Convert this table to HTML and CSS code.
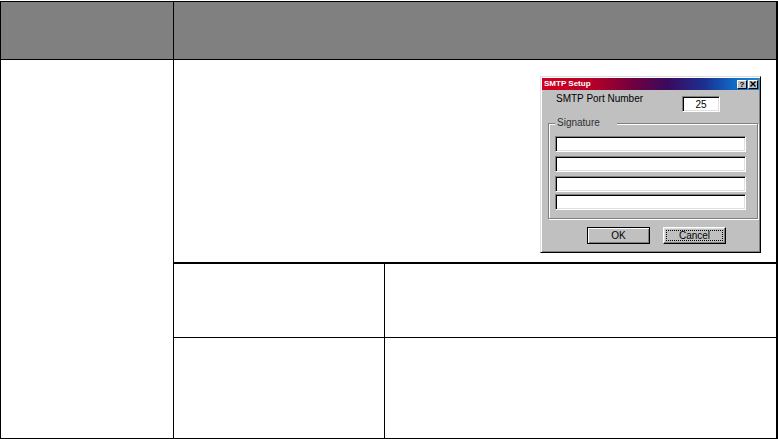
FILE: index.html
```html
<!DOCTYPE html>
<html>
<head>
<meta charset="utf-8">
<link rel="stylesheet" href="styles.css">
</head>
<body>
<div class="tbl">
  <div class="hcell"></div>
  <div class="hcell hcell-2"></div>
  <div class="bcell"></div>
  <div class="bcell-2">
    <div class="shot">
      <div class="dlg">
        <div class="title">
          <span class="title-text">SMTP Setup</span>
          <span class="tb">?</span>
          <span class="tb tb-x"><svg width="6" height="6" viewBox="0 0 6 6"><path d="M0.5 0.5L5.5 5.5M5.5 0.5L0.5 5.5" stroke="#000" stroke-width="1.4"/></svg></span>
        </div>
        <div class="port">
          <span class="lbl">SMTP Port Number</span>
          <span class="tbox">25</span>
        </div>
        <div class="grp">
          <span class="glbl">Signature</span>
          <div class="fld"></div>
          <div class="fld fld-2"></div>
          <div class="fld fld-3"></div>
          <div class="fld fld-4"></div>
        </div>
        <div class="btns">
          <div class="btn btn-ok">OK</div>
          <div class="btn btn-cancel"><span class="focus">Cancel</span></div>
        </div>
      </div>
    </div>
    <div class="row row-a">
      <div class="ca"></div>
      <div class="cb"></div>
    </div>
    <div class="row row-b">
      <div class="ca"></div>
      <div class="cb"></div>
    </div>
  </div>
</div>
</body>
</html>
```
FILE: styles.css
```css
* { box-sizing: border-box; }
body {
  margin: 0;
  background: #fff;
  font-family: "Liberation Sans", Arial, sans-serif;
}
.tbl {
  margin-top: 1px;
  width: 778px;
  border: 1px solid #000;
  border-right-width: 2px;
  display: grid;
  grid-template-columns: 172px 1fr;
  grid-template-rows: 58px 378px;
}
.hcell {
  background: #808080;
  border-bottom: 1px solid #000;
}
.hcell-2 { border-left: 1px solid #000; }
.bcell { background: #fff; }
.bcell-2 {
  border-left: 1px solid #000;
  display: flex;
  flex-direction: column;
}
.shot {
  height: 204px;
  border-bottom: 2px solid #000;
  display: flex;
  justify-content: flex-end;
  align-items: flex-start;
  padding: 16px 15px 0 0;
}
.row {
  display: grid;
  grid-template-columns: 211px 1fr;
}
.row-a { height: 74px; border-bottom: 1px solid #000; }
.row-b { height: 100px; }
.ca { border-right: 1px solid #000; }

/* dialog */
.dlg {
  width: 221px;
  height: 177px;
  background: #c0c0c0;
  border: 1px solid;
  border-color: #dfdfdf #000 #000 #dfdfdf;
  padding: 1px;
  box-shadow: inset 1px 1px 0 #fff, inset -1px -1px 0 #808080;
  display: flex;
  flex-direction: column;
  color: #000;
}
.title {
  height: 12px;
  background: linear-gradient(to right, #d40020 0%, #b00028 25%, #700040 42%, #3a0a5e 58%, #1c3090 75%, #1068c4 88%, #1888d8 100%);
  display: flex;
  align-items: center;
  padding: 0 1px 0 2px;
  gap: 1px;
}
.title-text {
  flex: 1;
  color: #fff;
  font-weight: bold;
  font-size: 8px;
  line-height: 10px;
}
.tb {
  width: 10px;
  height: 9px;
  background: #c0c0c0;
  border: 1px solid;
  border-color: #fff #000 #000 #fff;
  display: flex;
  align-items: center;
  justify-content: center;
  font-size: 8px;
  font-weight: bold;
  line-height: 7px;
  color: #000;
}
.port {
  display: flex;
  align-items: center;
  margin-top: 6px;
  height: 16px;
  font-size: 10px;
}
.lbl {
  width: 140px;
  padding-left: 14px;
  align-self: flex-start;
  margin-top: -3px;
  line-height: 12px;
}
.tbox {
  width: 38px;
  height: 16px;
  background: #fff;
  border: 1px solid;
  border-color: #808080 #fff #fff #808080;
  box-shadow: inset 1px 1px 0 #000, inset -1px -1px 0 #dfdfdf;
  display: flex;
  align-items: center;
  justify-content: center;
  font-size: 10px;
}
.grp {
  position: relative;
  margin: 11px 0 0 6px;
  width: 210px;
  height: 96px;
  border: 1px solid #808080;
  box-shadow: inset 1px 1px 0 #fff, 1px 1px 0 #fff;
  padding: 12px 0 0 6px;
  display: flex;
  flex-direction: column;
}
.glbl {
  position: absolute;
  top: -7px;
  left: 6px;
  padding: 0 17px 0 2px;
  background: #c0c0c0;
  font-size: 10px;
  line-height: 12px;
  color: #303030;
}
.fld {
  width: 191px;
  height: 16px;
  flex: none;
  background: #fff;
  border: 1px solid;
  border-color: #808080 #fff #fff #808080;
  box-shadow: inset 1px 1px 0 #000, inset -1px -1px 0 #dfdfdf;
}
.fld-2, .fld-3 { margin-top: 4px; }
.fld-4 { margin-top: 2px; }
.btns {
  display: flex;
  margin: 8px 0 0 45px;
  gap: 13px;
}
.btn {
  width: 63px;
  height: 17px;
  display: flex;
  align-items: center;
  justify-content: center;
  font-size: 10px;
  background: #c0c0c0;
}
.btn-ok {
  border: 1px solid #000;
  box-shadow: inset 1px 1px 0 #fff, inset -1px -1px 0 #808080;
}
.btn-cancel {
  border: 1px solid;
  border-color: #fff #000 #000 #fff;
  box-shadow: inset -1px -1px 0 #808080, inset 1px 1px 0 #dfdfdf;
  padding: 2px;
  align-items: stretch;
}
.focus {
  flex: 1;
  border: 1px dotted #000;
  display: flex;
  align-items: center;
  justify-content: center;
  line-height: 10px;
}
```
